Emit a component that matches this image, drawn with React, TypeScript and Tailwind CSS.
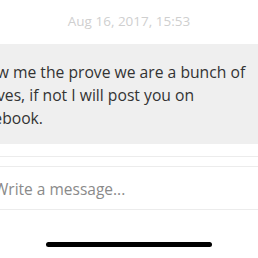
import React from "react";

const font = { fontFamily: '"Open Sans", "Noto Sans", sans-serif' };

export default function App() {
  return (
    <div className="relative h-[258px] w-[258px] overflow-hidden bg-white" style={font}>
      <div className="flex h-[44px] items-center justify-center pb-[1px] text-[13.5px] text-[#cfcfcf]">
        Aug 16, 2017, 15:53
      </div>

      <div className="flex h-[100px] bg-[#efefef]">
        <p className="-ml-[31px] w-[290px] shrink-0 pt-[17px] text-[15.7px] leading-[23px] text-[#333333]">
          Show me the prove we are a bunch of thieves, if not I will post you on Facebook.
        </p>
      </div>

      <div className="mt-[12px] border-t border-[#ececec]" />

      <div className="mt-[9px] flex h-[44px] items-center border-y border-[#ececec] pt-[4px]">
        <span className="-ml-[6px] text-[15.5px] text-[#8a8a8a]">Write a message...</span>
      </div>

      <div className="mt-[32px] flex justify-center">
        <div className="h-[5px] w-[166px] rounded-full bg-black" />
      </div>
    </div>
  );
}
